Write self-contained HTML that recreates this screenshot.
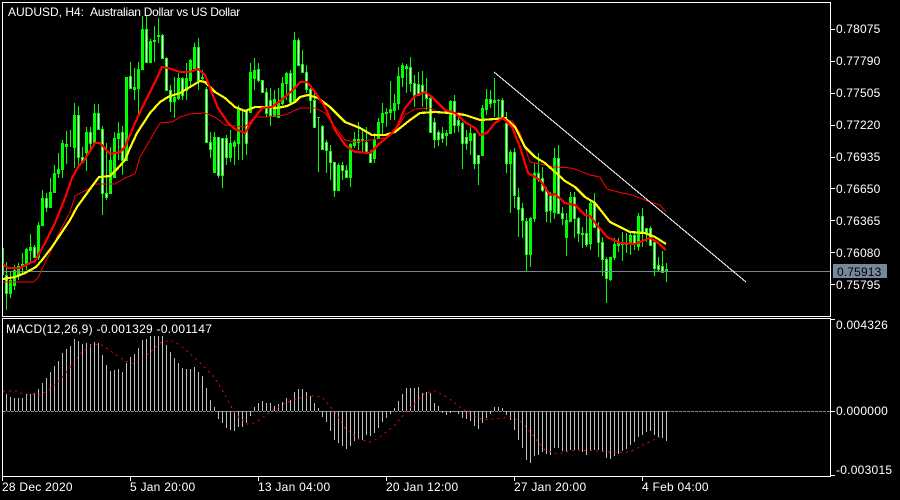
<!DOCTYPE html>
<html>
<head>
<meta charset="utf-8">
<style>
html,body{margin:0;padding:0;background:#000;}
svg{display:block;}
text{font-family:"Liberation Sans",sans-serif;font-size:12px;fill:#fff;white-space:pre;}
.v{letter-spacing:.15px;}
.t{letter-spacing:.25px;}
</style>
</head>
<body>
<svg width="900" height="500" viewBox="0 0 900 500" xmlns="http://www.w3.org/2000/svg">
<rect width="900" height="500" fill="#000"/>
<g fill="none" shape-rendering="crispEdges">
<!-- wicks -->
<path stroke="#00ff00" d="M3.5 248V275M6.5 262V310M10.5 272V298M14.5 265V290M18.5 263V280M22.5 253V273M26.5 248V270M30.5 234V263M34.5 245V258M38.5 222V260M42.5 190V225M46.5 193V212M50.5 178V208M54.5 165V192M58.5 153V178M62.5 140V178M66.5 131V164M70.5 130V147M74.5 103V168M78.5 106V165M82.5 147V162M86.5 127V171M90.5 127V152M94.5 104V143M98.5 104V129M102.5 126V215M106.5 143V200M110.5 147V193M114.5 132V178M118.5 122V160M122.5 126V175M126.5 77V160M130.5 62V88M134.5 68V100M138.5 62V115M142.5 16V70M146.5 16V62M150.5 39V63M154.5 26V62M158.5 18V43M162.5 34V58M166.5 57V90M170.5 85V112M174.5 77V118M178.5 73V100M182.5 77V100M186.5 63V100M190.5 59V88M194.5 43V70M198.5 38V90M202.5 70V80M206.5 87V142M210.5 132V158M214.5 132V172M218.5 137V178M222.5 138V188M226.5 135V165M230.5 130V162M234.5 140V165M238.5 105V160M242.5 110V160M246.5 110V155M250.5 63V113M254.5 58V90M258.5 63V82M262.5 80V92M266.5 88V117M270.5 88V126M274.5 90V117M278.5 88V118M282.5 77V105M286.5 72V100M290.5 70V102M294.5 32V102M298.5 38V65M302.5 50V73M306.5 65V93M310.5 85V113M314.5 92V127M318.5 117V172M322.5 125V150M326.5 140V173M330.5 145V180M334.5 162V197M338.5 163V191M342.5 162V180M346.5 165V178M350.5 143V187M354.5 132V148M358.5 122V150M362.5 128V152M366.5 127V153M370.5 150V163M374.5 133V163M378.5 118V138M382.5 103V135M386.5 108V127M390.5 81V120M394.5 94V120M398.5 67V110M402.5 63V87M406.5 64V93M410.5 57V92M414.5 75V107M418.5 72V95M422.5 71V107M426.5 78V110M430.5 97V132M434.5 118V148M438.5 130V146M442.5 127V143M446.5 130V146M450.5 100V133M454.5 95V133M458.5 113V132M462.5 122V169M466.5 130V150M470.5 127V155M474.5 133V169M478.5 155V185M482.5 105V155M486.5 89V115M490.5 90V108M494.5 78V117M498.5 99V117M502.5 98V118M506.5 112V173M510.5 150V213M514.5 148V208M518.5 188V237M522.5 203V238M526.5 218V271M530.5 217V267M534.5 163V222M538.5 153V182M542.5 167V192M546.5 187V222M550.5 192V223M554.5 148V219M558.5 145V213M562.5 207V225M566.5 213V256M570.5 192V222M574.5 192V238M578.5 217V242M582.5 227V248M586.5 209V247M590.5 201V250M594.5 193V228M598.5 222V257M602.5 237V276M606.5 257V303M610.5 257V281M614.5 238V260M618.5 238V252M622.5 232V261M626.5 233V253M630.5 233V255M634.5 233V250M638.5 213V251M642.5 208V247M646.5 228V242M650.5 226V246M654.5 240V276M658.5 257V272M662.5 251V273M666.5 263V282"/>
<!-- body outlines -->
<path stroke="#00ff00" stroke-width="3" d="M6.5 275V294M10.5 280V294M14.5 270V286M18.5 266V276M22.5 264V267M26.5 249V264M30.5 247V251M34.5 247V258M38.5 225V258M42.5 198V226M46.5 198V208M50.5 192V208M54.5 173V193M58.5 169V174M62.5 143V170M66.5 144V147M74.5 115V148M78.5 115V158M82.5 157V163M86.5 132V153M90.5 132V144M94.5 113V143M98.5 113V130M102.5 129V194M106.5 193V198M110.5 160V194M114.5 138V178M118.5 133V139M122.5 132V161M126.5 77V161M130.5 76V89M134.5 87V90M138.5 69V89M142.5 29V70M146.5 29V63M150.5 41V63M154.5 40V42M158.5 35V37M162.5 35V59M166.5 58V91M170.5 90V102M174.5 97V102M178.5 78V99M182.5 78V96M186.5 78V91M190.5 60V81M194.5 47V69M198.5 47V81M202.5 77V79M206.5 89V143M210.5 142V150M214.5 137V173M218.5 137V176M222.5 138V176M226.5 138V158M230.5 143V158M234.5 142V147M238.5 108V144M246.5 110V144M250.5 72V113M254.5 70V79M258.5 69V81M262.5 80V93M266.5 92V114M270.5 100V116M274.5 99V117M278.5 103V118M282.5 83V104M286.5 73V84M290.5 73V103M294.5 40V103M298.5 40V66M302.5 64V73M306.5 72V90M310.5 89V101M314.5 100V128M318.5 117V118M322.5 126V150M326.5 142V151M330.5 151V163M334.5 162V191M338.5 165V191M342.5 165V171M346.5 170V178M350.5 144V178M354.5 139V146M358.5 139V143M362.5 139V141M366.5 142V153M370.5 152V163M374.5 139V159M378.5 122V139M382.5 113V123M386.5 112V114M390.5 109V113M394.5 103V111M398.5 76V104M402.5 65V78M406.5 66V69M410.5 67V84M414.5 83V97M418.5 84V96M422.5 85V94M426.5 93V99M430.5 98V133M434.5 122V140M438.5 132V140M442.5 133V139M446.5 133V136M450.5 101V134M454.5 101V126M458.5 120V126M462.5 123V144M466.5 137V144M470.5 133V141M474.5 133V164M478.5 155V164M482.5 108V156M486.5 99V110M490.5 99V104M494.5 100V103M498.5 100V101M502.5 100V119M506.5 123V164M510.5 152V164M514.5 152V196M518.5 197V210M522.5 208V221M526.5 221V255M530.5 218V255M534.5 173V219M538.5 173V180M542.5 178V191M546.5 190V212M550.5 195V211M554.5 158V213M558.5 158V214M562.5 213V219M566.5 220V238M570.5 197V222M574.5 197V219M578.5 218V234M582.5 233V235M586.5 233V245M590.5 203V244M594.5 203V228M598.5 227V243M602.5 242V260M606.5 259V279M610.5 257V280M614.5 244V258M618.5 243V246M622.5 243V245M626.5 243V245M630.5 235V244M634.5 235V244M638.5 216V247M642.5 216V234M646.5 228V233M650.5 228V246M654.5 242V269M658.5 265V270M662.5 266V273M666.5 269V272"/>
<!-- white body centers -->
<path stroke="#ffffff" d="M6.5 276V293M34.5 248V257M46.5 199V207M78.5 116V157M82.5 158V162M90.5 133V143M98.5 114V129M102.5 130V193M106.5 194V197M122.5 133V160M130.5 77V88M146.5 30V62M162.5 36V58M166.5 59V90M170.5 91V101M182.5 79V95M198.5 48V80M206.5 90V142M210.5 143V149M218.5 138V175M222.5 139V175M226.5 139V157M246.5 111V143M258.5 70V80M262.5 81V92M266.5 93V113M270.5 101V115M290.5 74V102M298.5 41V65M302.5 65V72M306.5 73V89M310.5 90V100M314.5 101V127M322.5 127V149M326.5 143V150M330.5 152V162M334.5 163V190M342.5 166V170M346.5 171V177M366.5 143V152M370.5 153V162M410.5 68V83M414.5 84V96M418.5 85V95M422.5 86V93M426.5 94V98M430.5 99V132M434.5 123V139M438.5 133V139M442.5 134V138M454.5 102V125M458.5 121V125M462.5 124V143M466.5 138V143M474.5 134V163M478.5 156V163M490.5 100V103M502.5 101V118M506.5 124V163M514.5 153V195M518.5 198V209M522.5 209V220M526.5 222V254M538.5 174V179M542.5 179V190M546.5 191V211M550.5 196V210M558.5 159V213M562.5 214V218M574.5 198V218M578.5 219V233M586.5 234V244M594.5 204V227M598.5 228V242M602.5 243V259M606.5 260V278M634.5 236V243M642.5 217V233M646.5 229V232M650.5 229V245M654.5 243V268M658.5 266V269M662.5 267V272"/>
<!-- current price line -->
<path stroke="#778899" d="M3 271.5H830"/>
<!-- slow thin red MA -->
<path stroke="#ff0000" stroke-width="1" d="M3 282L33 282L38 278L43 267L50 253L58 235L70 212L75 196L90 188L93 184L115 184L125 178L135 174L140 157L150 140L160 123L172 122L180 117L190 114L205 113L215 117L225 125L245 127L255 117L265 117L285 115L300 108L315 108L325 113L335 127L345 140L355 142L385 138L395 132L405 115L415 109L430 108L440 113L460 113L480 119L500 119L512 121L520 133L530 162L545 165L555 167L572 168L590 175L600 177L607 189L622 193L632 195L650 202L660 205L666 212"/>
<!-- yellow MA -->
<path stroke="#ffff00" stroke-width="2.2" d="M3 279L15 277L25 273L36 267L42 260L52 247L60 235L70 220L77 207L93 185L99 177L110 176L118 168L125 160L130 148L137 133L150 113L160 102L168 97L180 93L190 87L200 81L205 82L215 92L225 98L235 107L245 111L255 107L265 107L277 108L287 106L295 102L300 97L308 95L318 98L330 107L345 122L360 128L372 135L385 135L395 132L410 120L420 113L435 112L450 113L465 115L480 120L495 119L505 118L515 127L525 147L535 157L545 163L555 172L565 181L575 187L585 197L595 203L610 222L620 227L630 232L645 233L655 237L666 244"/>
<!-- red MA -->
<path stroke="#ff0000" stroke-width="2.2" d="M3 264L8 268L20 268L30 263L35 261L45 243L55 223L65 198L72 178L78 167L85 159L95 143L100 143L110 154L120 152L125 147L135 123L142 108L155 82L162 67L168 68L180 72L190 72L198 69L205 75L212 93L218 108L228 123L235 129L245 133L253 120L262 108L272 107L285 97L295 88L300 82L307 82L315 92L325 107L335 130L345 145L355 152L370 153L380 143L390 135L397 127L405 108L415 96L425 92L432 97L445 110L455 113L465 122L475 128L480 135L487 133L495 123L503 118L512 127L520 147L528 173L535 177L540 180L550 195L555 194L565 203L575 205L585 215L590 216L597 225L607 237L620 243L635 244L650 238L657 242L666 250"/>
<!-- trend line -->
<path stroke="#ffffff" d="M494 72L746 282"/>
<!-- frame -->
<path stroke="#ffffff" d="M2.5 2V317M2 2.5H831M830.5 2V317M2 316.5H831M2 318.5H831M2.5 318V477M830.5 318V477M2 476.5H831"/>
<!-- price ticks -->
<path stroke="#ffffff" d="M831 29.5H835M831 61.5H835M831 93.5H835M831 125.5H835M831 157.5H835M831 188.5H835M831 220.5H835M831 252.5H835M831 284.5H835M831 319.5H835M831 411.5H835M831 475.5H835"/>
<!-- time ticks -->
<path stroke="#ffffff" d="M2.5 477V481M130.5 477V481M258.5 477V481M386.5 477V481M514.5 477V481M642.5 477V481"/>
<!-- MACD zero line -->
<path stroke="#778899" stroke-dasharray="3 1" d="M3 411.5H830"/>
<!-- histogram -->
<path stroke="#c0c0c0" d="M6.5 394V411M10.5 397V411M14.5 398V411M18.5 398V411M22.5 398V411M26.5 394V411M30.5 394V411M34.5 393V411M38.5 389V411M42.5 383V411M46.5 378V411M50.5 372V411M54.5 366V411M58.5 361V411M62.5 353V411M66.5 349V411M70.5 346V411M74.5 339V411M78.5 341V411M82.5 344V411M86.5 343V411M90.5 344V411M94.5 342V411M98.5 343V411M102.5 355V411M106.5 365V411M110.5 371V411M114.5 370V411M118.5 369V411M122.5 372V411M126.5 363V411M130.5 357V411M134.5 354V411M138.5 348V411M142.5 340V411M146.5 339V411M150.5 336V411M154.5 336V411M158.5 336V411M162.5 336V411M166.5 345V411M170.5 352V411M174.5 358V411M178.5 363V411M182.5 368V411M186.5 369V411M190.5 369V411M194.5 367V411M198.5 372V411M202.5 376V411M206.5 388V411M210.5 400V411M214.5 407V411M218.5 411V419M222.5 411V423M226.5 411V428M230.5 411V430M234.5 411V431M238.5 411V427M242.5 411V427M246.5 411V423M250.5 411V416M254.5 407V411M258.5 403V411M262.5 401V411M266.5 403V411M270.5 403V411M274.5 406V411M278.5 404V411M282.5 402V411M286.5 398V411M290.5 400V411M294.5 392V411M298.5 389V411M302.5 389V411M306.5 392V411M310.5 396V411M314.5 403V411M318.5 408V411M322.5 411V417M326.5 411V422M330.5 411V431M334.5 411V440M338.5 411V443M342.5 411V446M346.5 411V449M350.5 411V446M354.5 411V441M358.5 411V439M362.5 411V440M366.5 411V435M370.5 411V436M374.5 411V433M378.5 411V428M382.5 411V422M386.5 411V418M390.5 411V414M394.5 408V411M398.5 401V411M402.5 394V411M406.5 388V411M410.5 388V411M414.5 388V411M418.5 387V411M422.5 393V411M426.5 392V411M430.5 393V411M434.5 403V411M438.5 406V411M442.5 411V413M446.5 411V415M450.5 411V413M454.5 411V412M458.5 411V414M462.5 411V418M466.5 411V419M470.5 411V421M474.5 411V426M478.5 411V429M482.5 411V423M486.5 411V418M490.5 411V414M494.5 407V411M498.5 407V411M502.5 408V411M506.5 411V415M510.5 411V420M514.5 411V430M518.5 411V440M522.5 411V448M526.5 411V460M530.5 411V463M534.5 411V456M538.5 411V455M542.5 411V452M546.5 411V454M550.5 411V455M554.5 411V448M558.5 411V448M562.5 411V451M566.5 411V452M570.5 411V450M574.5 411V450M578.5 411V450M582.5 411V452M586.5 411V455M590.5 411V450M594.5 411V450M598.5 411V450M602.5 411V452M606.5 411V458M610.5 411V459M614.5 411V456M618.5 411V454M622.5 411V451M626.5 411V449M630.5 411V445M634.5 411V442M638.5 411V437M642.5 411V435M646.5 411V432M650.5 411V431M654.5 411V435M658.5 411V437M662.5 411V438M666.5 411V441"/>
<!-- signal -->
<path stroke="#ff0000" stroke-dasharray="2 4" d="M3 391L17 391L23 394L40 395L50 389L60 380L72 365L82 352L92 345L100 344L112 352L125 361L135 364L148 354L160 343L170 340L180 345L197 360L215 378L225 395L233 410L240 418L247 424L255 423L270 412L285 403L300 398L312 396L322 397L335 412L345 428L358 439L370 442L380 437L395 425L405 413L417 401L425 393L435 391L447 397L460 407L470 414L483 420L495 419L510 417L522 422L535 438L545 450L558 454L575 450L600 451L615 453L630 452L645 444L660 437L663 436"/>
<!-- price label box -->
<rect x="833" y="264" width="54" height="14" fill="#778899"/>
</g>
<text x="8" y="16">AUDUSD, H4:</text>
<text x="90" y="16" style="letter-spacing:-.27px">Australian Dollar vs US Dollar</text>
<text x="6" y="333" style="letter-spacing:.27px">MACD(12,26,9) -0.001329 -0.001147</text>
<text class="v" x="836" y="33">0.78075</text>
<text class="v" x="836" y="65">0.77790</text>
<text class="v" x="836" y="97">0.77505</text>
<text class="v" x="836" y="129">0.77220</text>
<text class="v" x="836" y="161">0.76935</text>
<text class="v" x="836" y="193">0.76650</text>
<text class="v" x="836" y="225">0.76365</text>
<text class="v" x="836" y="257">0.76080</text>
<text class="v" x="837" y="276" style="fill:#000">0.75913</text>
<text class="v" x="836" y="289">0.75795</text>
<text class="t" x="836" y="329">0.004326</text>
<text class="t" x="836" y="415">0.000000</text>
<text class="t" x="836" y="474">-0.003015</text>
<text class="t" x="2" y="491">28 Dec 2020</text>
<text class="t" x="130" y="491">5 Jan 20:00</text>
<text class="t" x="258" y="491">13 Jan 04:00</text>
<text class="t" x="386" y="491">20 Jan 12:00</text>
<text class="t" x="514" y="491">27 Jan 20:00</text>
<text class="t" x="642" y="491">4 Feb 04:00</text>
</svg>
</body>
</html>
